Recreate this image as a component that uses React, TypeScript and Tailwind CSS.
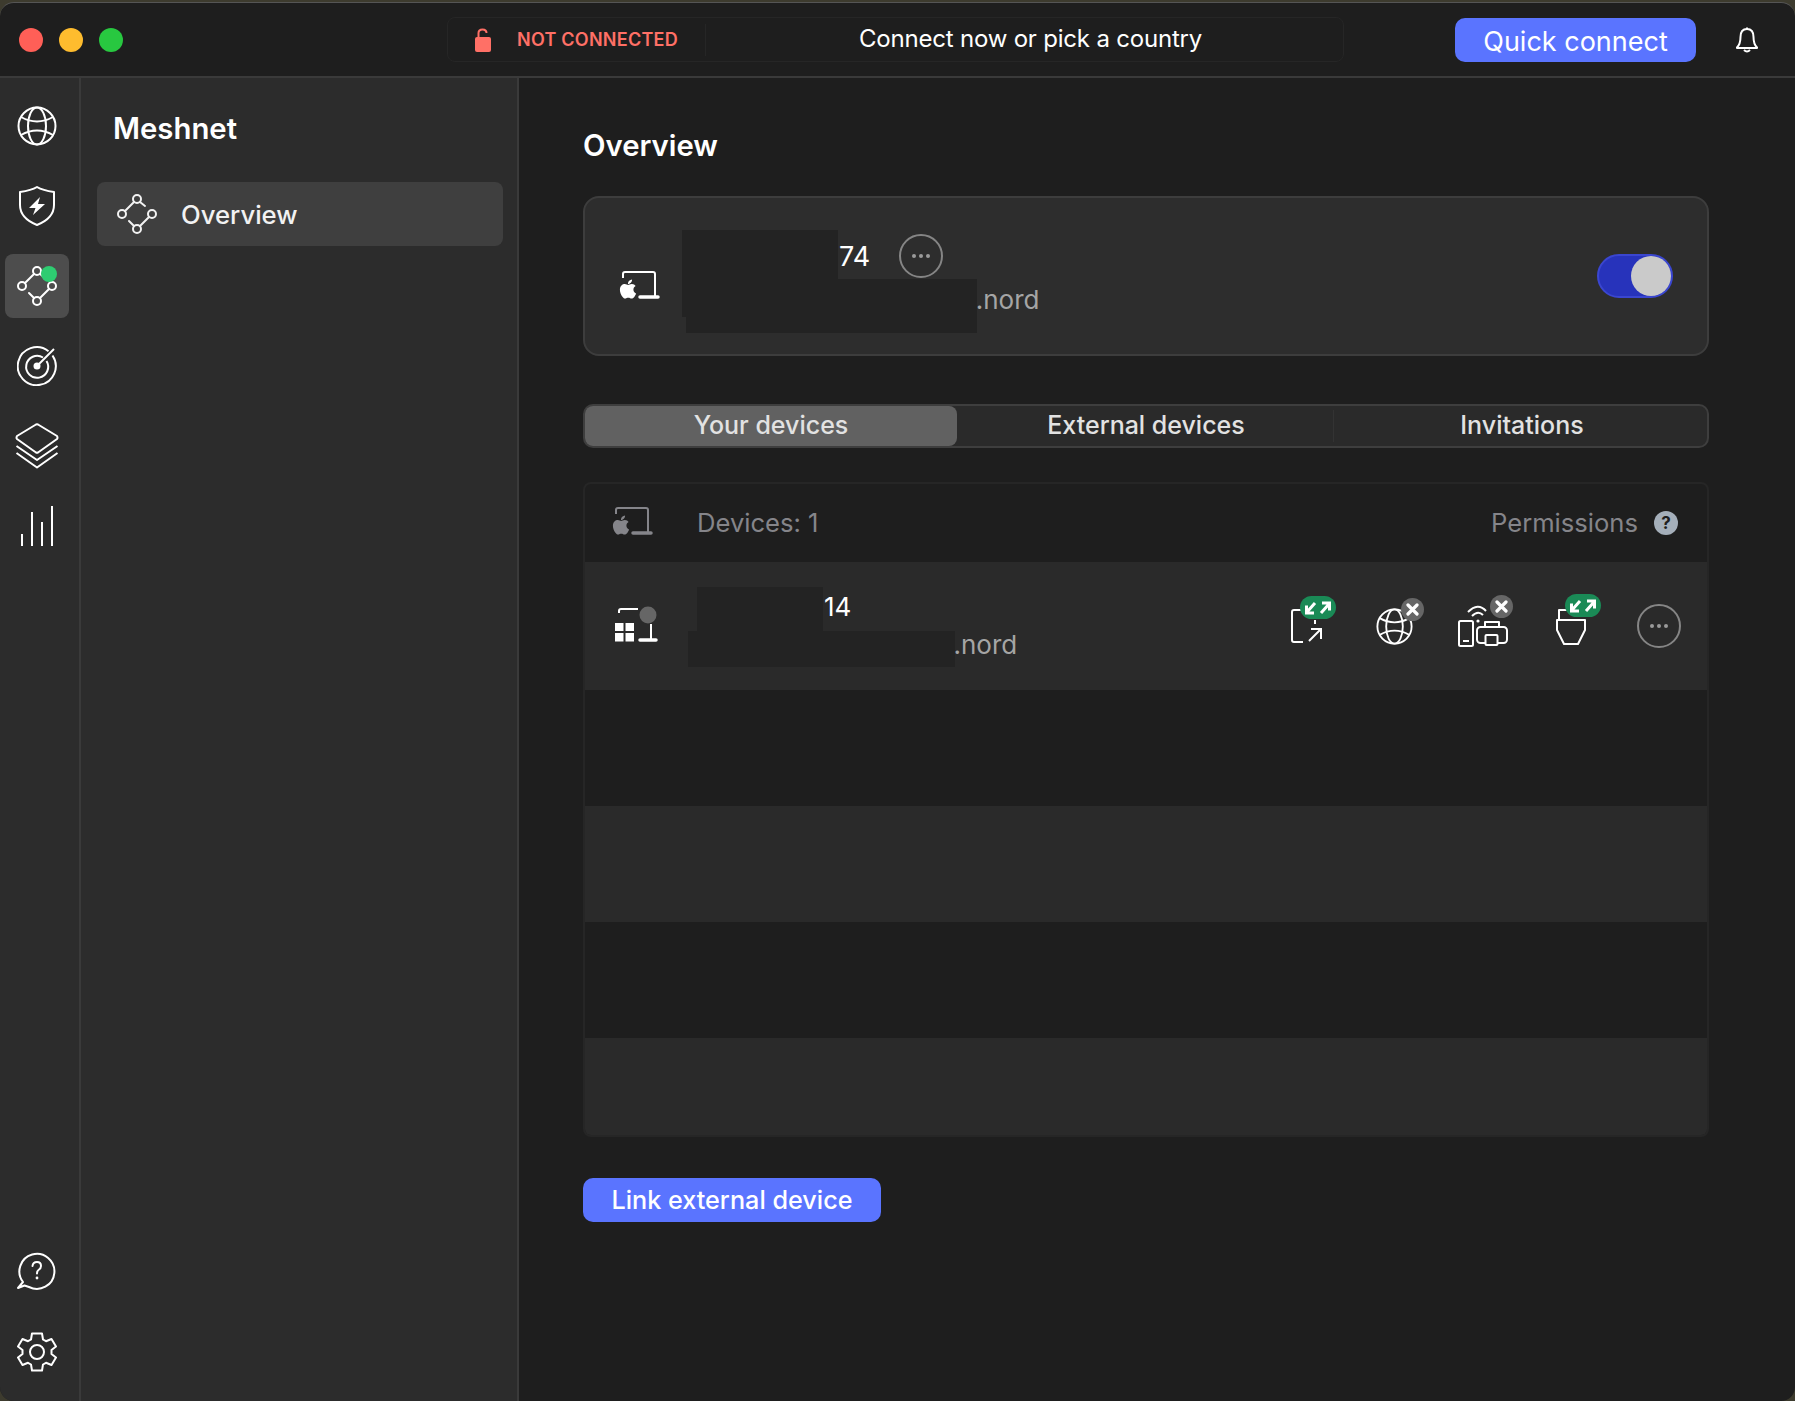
import { FaApple } from "react-icons/fa";

const font = { fontFamily: "Inter, 'Noto Sans', sans-serif" };

function Globe({ size = 40 }: { size?: number }) {
  return (
    <svg width={size} height={size} viewBox="0 0 40 40" fill="none" stroke="currentColor" strokeWidth="2">
      <circle cx="20" cy="20" r="18.5" />
      <ellipse cx="20" cy="20" rx="9" ry="18.5" />
      <path d="M4 11 Q20 20 36 11" />
      <path d="M4 29 Q20 20 36 29" />
    </svg>
  );
}

function Shield() {
  return (
    <svg width="40" height="40" viewBox="0 0 40 40" fill="none" stroke="currentColor" strokeWidth="2">
      <path d="M20 1 C25 4 30 5 37 6 V19 C37 28 30 35 20 39 C10 35 3 28 3 19 V6 C10 5 15 4 20 1 Z" strokeLinejoin="round" />
      <path d="M23 11 L12 22 H18.5 L16 29 L28 18 H21 Z" fill="currentColor" stroke="none" />
    </svg>
  );
}

function Mesh({ size = 40 }: { size?: number }) {
  return (
    <svg width={size} height={size} viewBox="0 0 40 40" fill="none" stroke="currentColor" strokeWidth="2">
      <circle cx="20" cy="5" r="4" />
      <circle cx="5" cy="20" r="4" />
      <circle cx="35" cy="20" r="4" />
      <circle cx="20" cy="35" r="4" />
      <path d="M8 17 L17 8 M23 8 L28 12 M32 23 L23 32 M17 32 L12 27" strokeLinecap="round" />
    </svg>
  );
}

function Radar() {
  return (
    <svg width="40" height="40" viewBox="0 0 40 40" fill="none" stroke="currentColor" strokeWidth="2">
      <path d="M31.5 5.2 A19 19 0 1 0 35.5 9.5" />
      <path d="M26 11.5 A11 11 0 1 0 29.5 15" />
      <circle cx="20" cy="20" r="3.5" fill="currentColor" stroke="none" />
      <path d="M20 20 L37 3" />
    </svg>
  );
}

function Layers() {
  return (
    <svg width="44" height="46" viewBox="0 0 44 46" fill="none" stroke="currentColor" strokeWidth="2" strokeLinejoin="round">
      <path d="M21 1.5 Q22 1 23 1.5 L42 13 Q43 15 42 16 L23 29.5 Q22 30 21 29.5 L2 16 Q1 15 2 13 Z" />
      <path d="M1.5 23 L22 37 L42.5 23" />
      <path d="M1.5 30 L22 44.5 L42.5 30" />
    </svg>
  );
}

function Bars() {
  return (
    <svg width="40" height="42" viewBox="0 0 40 42" fill="none" stroke="currentColor" strokeWidth="2">
      <path d="M5 41 V29 M15 41 V7 M25 41 V17 M35 41 V1" />
    </svg>
  );
}

function Help() {
  return (
    <svg width="40" height="40" viewBox="0 0 40 40" fill="none" stroke="currentColor" strokeWidth="2" strokeLinejoin="round">
      <path d="M1 36 L6 30 A17.5 17.5 0 1 1 12 35 Q9 34 7.5 33.5 Z" />
      <path d="M15.5 14 Q16 10 20 10 Q24 10 24 14 Q24 16.5 21.5 18 Q20 19 20 21.5" strokeLinecap="round" />
      <circle cx="20" cy="26" r="1.4" fill="currentColor" stroke="none" />
    </svg>
  );
}

function Gear() {
  return (
    <svg width="40" height="40" viewBox="0 0 40 40" fill="none" stroke="currentColor" strokeWidth="2" strokeLinejoin="round">
      <path d="M15 1.5 H25 L26 7.5 L29 9.2 L34.5 7 L39 14.5 L34.5 18 V22 L39 25.5 L34.5 33 L29 30.8 L26 32.5 L25 38.5 H15 L14 32.5 L11 30.8 L5.5 33 L1 25.5 L5.5 22 V18 L1 14.5 L5.5 7 L11 9.2 L14 7.5 Z" />
      <circle cx="20" cy="20" r="7" />
    </svg>
  );
}

function Bell() {
  return (
    <svg width="24" height="26" viewBox="0 0 24 26" fill="none" stroke="currentColor" strokeWidth="2" strokeLinejoin="round">
      <path d="M12 2 C7 2 5.5 6 5.5 10 C5.5 15 4.5 18 2 20.5 V21 H22 V20.5 C19.5 18 18.5 15 18.5 10 C18.5 6 17 2 12 2 Z" />
      <path d="M9 23 Q12 26 15 23" />
      <path d="M12 0.5 V2" />
    </svg>
  );
}

function Lock() {
  return (
    <svg width="18" height="24" viewBox="0 0 18 24" fill="none">
      <rect x="1" y="9" width="16" height="15" rx="2" fill="#ff7066" />
      <path d="M4.5 9 V5 Q4.5 1.5 8.5 1.5 Q12.5 1.5 12.5 5" stroke="#ff7066" strokeWidth="2" />
    </svg>
  );
}

function MacIcon({ className = "" }: { className?: string }) {
  return (
    <div className={`relative h-[28px] w-[42px] shrink-0 ${className}`}>
      <svg width="42" height="28" viewBox="0 0 42 28" fill="none" stroke="currentColor" strokeWidth="2">
        <path d="M5 7 V3 Q5 1 7 1 H35 Q37 1 37 3 V25" />
        <path d="M22 26 H40" strokeWidth="3.5" strokeLinecap="round" />
      </svg>
      <FaApple className="absolute bottom-[-1px] left-[-1px] text-[22px]" />
    </div>
  );
}

function WindowsIcon() {
  return (
    <svg className="-mt-[4px] shrink-0" width="44" height="38" viewBox="0 0 44 38" fill="none">
      <path d="M5 8 V6 Q5 4 7 4 H24" stroke="#fff" strokeWidth="2" />
      <circle cx="34" cy="10" r="8.5" fill="#666" />
      <path d="M37 19 V34" stroke="#fff" strokeWidth="2" />
      <path d="M26 35 H42" stroke="#fff" strokeWidth="3.5" strokeLinecap="round" />
      <path d="M1 18 H9.5 V26 H1 Z M11.5 18 H20 V26 H11.5 Z M1 28 H9.5 V36.5 H1 Z M11.5 28 H20 V36.5 H11.5 Z" fill="#fff" />
    </svg>
  );
}

function Dots() {
  return (
    <div className="flex h-[44px] w-[44px] items-center justify-center gap-[3px] rounded-full border-2 border-[#858585]">
      <span className="h-[4px] w-[4px] rounded-full bg-[#9a9a9a]" />
      <span className="h-[4px] w-[4px] rounded-full bg-[#9a9a9a]" />
      <span className="h-[4px] w-[4px] rounded-full bg-[#9a9a9a]" />
    </div>
  );
}

function GreenBadge() {
  return (
    <span className="absolute left-[9px] top-[-13px] flex h-[23px] w-[36px] items-center justify-center rounded-full bg-[#1a8a56]">
      <svg width="26" height="14" viewBox="0 0 26 14" fill="none" stroke="#fff" strokeWidth="3">
        <path d="M10 2 L2 11 M1.5 4.5 V12 H9" />
        <path d="M16 12 L24 3 M17 2 H24.5 V9.5" />
      </svg>
    </span>
  );
}

function CloseBadge({ className }: { className: string }) {
  return (
    <span className={`absolute top-[-10px] flex h-[23px] w-[23px] items-center justify-center rounded-full bg-[#666] ${className}`}>
      <svg width="13" height="13" viewBox="0 0 13 13" stroke="#fff" strokeWidth="3.2" strokeLinecap="round">
        <path d="M2 2 L11 11 M11 2 L2 11" />
      </svg>
    </span>
  );
}

const railTop = [
  { icon: <Globe /> },
  { icon: <Shield /> },
  { icon: <Mesh />, active: true },
  { icon: <Radar /> },
  { icon: <Layers /> },
  { icon: <Bars /> },
];

export default function App() {
  return (
    <div style={font} className="h-[1401px] w-[1795px] overflow-hidden bg-[#3d3b2e] pt-[2px] text-white">
      <div className="flex h-[1399px] flex-col overflow-hidden rounded-[14px] border-t border-[#555] bg-[#1e1e1e]">
        {/* Title bar */}
        <header className="flex h-[75px] shrink-0 items-center border-b-2 border-[#3a3a3a]">
          <div className="flex w-[447px] gap-[16px] pl-[19px]">
            <span className="h-[24px] w-[24px] rounded-full bg-[#ff5f57]" />
            <span className="h-[24px] w-[24px] rounded-full bg-[#febc2e]" />
            <span className="h-[24px] w-[24px] rounded-full bg-[#28c840]" />
          </div>
          <div className="flex h-[45px] w-[897px] items-center rounded-[8px] border border-[#262626]">
            <div className="flex h-[32px] w-[258px] items-center gap-[25px] border-r border-[#262626] pl-[26px]">
              <Lock />
              <span className="text-[18px] font-semibold tracking-[0.25px] text-[#ff7066]">NOT CONNECTED</span>
            </div>
            <span className="flex-1 pb-[1px] pl-[12px] text-center text-[24px] tracking-[-0.2px]">Connect now or pick a country</span>
          </div>
          <button className="ml-[111px] h-[44px] w-[241px] rounded-[10px] bg-[#5a74ff] pt-[3px] text-[27px] leading-none">Quick connect</button>
          <span className="ml-[39px]"><Bell /></span>
        </header>

        <div className="flex min-h-0 flex-1">
          {/* Icon rail */}
          <nav className="flex w-[81px] shrink-0 flex-col items-center gap-[16px] border-r-2 border-[#3a3a3a] bg-[#2c2c2c] pb-[17px] pr-[5px] pt-[16px]">
            {railTop.map((item, i) => (
              <div key={i} className={`relative flex h-[64px] w-[64px] items-center justify-center rounded-[8px] ${item.active ? "bg-[#4d4d4d]" : ""}`}>
                {item.icon}
                {item.active && <span className="absolute left-[36px] top-[12px] h-[16px] w-[16px] rounded-full bg-[#2ecc71]" />}
              </div>
            ))}
            <div className="mt-auto flex h-[64px] w-[64px] items-center justify-center"><Help /></div>
            <div className="flex h-[64px] w-[64px] items-center justify-center"><Gear /></div>
          </nav>

          {/* Section sidebar */}
          <aside className="w-[438px] shrink-0 border-r-2 border-[#3a3a3a] bg-[#2c2c2c] pl-[16px] pr-[14px]">
            <h2 className="pl-[16px] pt-[31px] text-[29.3px] font-semibold leading-[40px]">Meshnet</h2>
            <div className="mt-[33px] flex h-[64px] items-center gap-[24px] rounded-[8px] bg-[#3f3f3f] pl-[20px] text-[#f2f2f2]">
              <Mesh />
              <span className="pt-[2px] text-[25.7px] font-medium">Overview</span>
            </div>
          </aside>

          {/* Main panel */}
          <main className="flex-1 pl-[64px] pr-[86px]">
            <h1 className="pt-[48px] text-[29.3px] font-semibold leading-[40px]">Overview</h1>

            <section className="relative mt-[30px] flex h-[160px] items-center rounded-[16px] border-2 border-[#3d3d3d] bg-[#2d2d2d] pl-[33px] pr-[34px]">
              <MacIcon className="mt-[18px]" />
              <div className="ml-[22px] flex flex-1 flex-col">
                <div className="flex items-center pl-[157px] text-[27px] leading-[44px]">
                  74
                  <span className="-mt-[3px] ml-[29px]"><Dots /></span>
                </div>
                <span className="mt-[4px] pl-[280px] text-[26px] leading-[34px] text-[#a5a5a5]">s.nord</span>
              </div>
              <span className="absolute left-[97px] top-[32px] h-[87px] w-[156px] bg-[#232323]" />
              <span className="absolute left-[101px] top-[81px] h-[54px] w-[291px] bg-[#232323]" />
              <span className="relative flex h-[44px] w-[76px] items-center justify-end rounded-full border-2 border-[#3a46d0] bg-[#2733bb]">
                <span className="h-[40px] w-[40px] rounded-full bg-[#cacaca]" />
              </span>
            </section>

            <div className="mt-[48px] grid h-[44px] grid-cols-[372px_377px_1fr] items-center rounded-[10px] border-2 border-[#3e3e3e] bg-[#2a2a2a] text-[25px] font-medium text-[#e2e2e2]">
              <div className="flex h-[40px] items-center justify-center rounded-[8px] bg-[#616161]">Your devices</div>
              <div className="flex h-[32px] items-center justify-center border-r border-[#333] pl-[2px]">External devices</div>
              <div className="flex items-center justify-center pl-[3px]">Invitations</div>
            </div>

            <section className="mt-[34px] flex h-[655px] flex-col overflow-hidden rounded-[8px] border-2 border-[#262626]">
              <div className="flex h-[78px] shrink-0 items-center pl-[26px] pr-[29px] text-[25.6px] text-[#85858a]">
                <MacIcon className="-mt-[4px]" />
                <span className="ml-[44px]">Devices: 1</span>
                <span className="ml-auto">Permissions</span>
                <span className="ml-[16px] flex h-[24px] w-[24px] items-center justify-center rounded-full bg-[#a5afba] text-[17px] font-bold leading-none text-[#1e1e1e]">?</span>
              </div>

              <div className="relative flex h-[128px] shrink-0 items-center bg-[#2a2a2a] pl-[29px] pr-[26px] text-white">
                <WindowsIcon />
                <div className="-mt-[3px] ml-[37px] flex flex-col">
                  <span className="pb-[1px] pl-[129px] text-[26px] leading-[40px]">14</span>
                  <span className="pl-[250px] text-[26px] leading-[34px] text-[#a5a5a5]">t.nord</span>
                </div>
                <span className="absolute left-[112px] top-[25px] h-[44px] w-[126px] bg-[#232323]" />
                <span className="absolute left-[103px] top-[69px] h-[36px] w-[267px] bg-[#232323]" />

                <div className="ml-auto flex items-center">
                  <span className="relative h-[34px] w-[32px]">
                    <svg width="32" height="34" viewBox="0 0 32 34" fill="none" stroke="#fff" strokeWidth="2">
                      <path d="M12 1 H3 Q1 1 1 3 V31 Q1 33 3 33 H12" />
                      <path d="M24 11 V15" />
                      <path d="M18 32 L30 20 M20 20 H30 V30" />
                    </svg>
                    <GreenBadge />
                  </span>
                  <span className="relative ml-[53px] text-white">
                    <Globe size={37} />
                    <CloseBadge className="right-[-11px]" />
                  </span>
                  <span className="relative ml-[45px] h-[42px] w-[50px]">
                    <svg width="50" height="42" viewBox="0 0 50 42" fill="none" stroke="#fff" strokeWidth="2" strokeLinejoin="round">
                      <rect x="1" y="16" width="14" height="25" rx="1.5" />
                      <path d="M5 36 H11" />
                      <path d="M10 7 Q20 -3 28 6 M14 11 Q20 5 25 10" />
                      <circle cx="20" cy="16" r="1.6" fill="#fff" stroke="none" />
                      <rect x="19" y="22" width="30" height="16" rx="3.5" />
                      <path d="M27 22 V17 H41 V22" />
                      <rect x="27.5" y="30" width="12" height="10" rx="1" fill="#2a2a2a" />
                    </svg>
                    <CloseBadge className="right-[-5px]" />
                  </span>
                  <span className="relative ml-[48px] h-[38px] w-[30px]">
                    <svg width="30" height="38" viewBox="0 0 30 38" fill="none" stroke="#fff" strokeWidth="2" strokeLinejoin="round">
                      <path d="M3 12 V3 H16 M1 13 H29 V23 L22 37 H8 L1 23 Z" />
                    </svg>
                    <GreenBadge />
                  </span>
                  <span className="ml-[51px]"><Dots /></span>
                </div>
              </div>

              <div className="h-[116px] shrink-0 bg-[#1e1e1e]" />
              <div className="h-[116px] shrink-0 bg-[#2a2a2a]" />
              <div className="h-[116px] shrink-0 bg-[#1e1e1e]" />
              <div className="flex-1 bg-[#2a2a2a]" />
            </section>

            <button className="mt-[41px] h-[44px] w-[298px] rounded-[10px] bg-[#5a74ff] pt-[2px] text-[25.2px] font-medium">Link external device</button>
          </main>
        </div>
      </div>
    </div>
  );
}
